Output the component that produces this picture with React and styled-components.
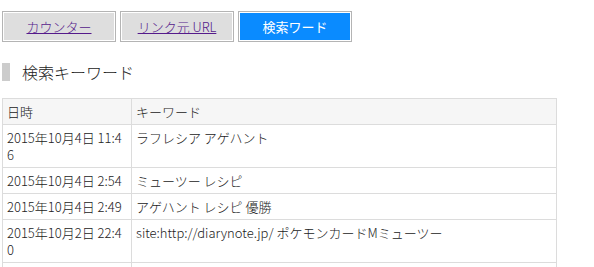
import React from 'react'
import styled, { createGlobalStyle } from 'styled-components'

const GlobalStyle = createGlobalStyle`
  body {
    margin: 0;
    background: #fff;
    font-family: "Noto Sans CJK JP", "Noto Sans", sans-serif;
    color: #222;
  }
`;

const rows = [
  { date: '2015年10月4日 11:46', word: 'ラフレシア アゲハント' },
  { date: '2015年10月4日 2:54', word: 'ミューツー レシピ' },
  { date: '2015年10月4日 2:49', word: 'アゲハント レシピ 優勝' },
  { date: '2015年10月2日 22:40', word: 'site:http://diarynote.jp/ ポケモンカードMミューツー' },
  { date: '\u00a0', word: '\u00a0' },
];

function App() {
  return <>
    <GlobalStyle />
    <Wrapper>
      <Tabs>
        <Tab><a href="#counter">カウンター</a></Tab>
        <Tab><a href="#ref">リンク元 URL</a></Tab>
        <Tab active>検索ワード</Tab>
      </Tabs>
      <Heading>検索キーワード</Heading>
      <Table>
        <thead>
          <tr>
            <Th style={{width: 120}}>日時</Th>
            <Th>キーワード</Th>
          </tr>
        </thead>
        <tbody>
          {rows.map((r, i) => (
            <tr key={i}>
              <Td>{r.date}</Td>
              <Td>{r.word}</Td>
            </tr>
          ))}
        </tbody>
      </Table>
    </Wrapper>
  </>
}

export default App

const Wrapper = styled.div`
    padding: 11px 2px 0 2px;
`;
const Tabs = styled.div`
    display: flex;
    gap: 4px;
`;
const Tab = styled.div`
    width: 114px;
    height: 31px;
    box-sizing: border-box;
    display: flex;
    align-items: center;
    justify-content: center;
    border: 1px solid #b4b4b4;
    box-shadow: inset 0 0 0 1px #fff;
    background: ${p => p.active ? '#0a8bff' : '#dedede'};
    color: ${p => p.active ? '#fff' : '#222'};
    font-size: 13px;
    font-weight: ${p => p.active ? 400 : 300};
    a{
        color: #551a8b;
        text-decoration: underline;
    }
`;
const Heading = styled.h2`
    margin: 21px 0 0 0;
    height: 18px;
    display: flex;
    align-items: center;
    border-left: 8px solid #cccccc;
    padding-left: 12px;
    font-size: 16px;
    font-weight: 300;
    color: #222;
`;
const Table = styled.table`
    margin-top: 17px;
    width: 555px;
    border-collapse: collapse;
    font-size: 13px;
    font-weight: 300;
    line-height: 17px;
`;
const Th = styled.th`
    text-align: left;
    font-weight: 300;
    background: #f6f6f6;
    border: 1px solid #dcdcdc;
    padding: 4px 4px;
`;
const Td = styled.td`
    border: 1px solid #dcdcdc;
    padding: 4px 4px;
    vertical-align: top;
    word-break: break-all;
`;
